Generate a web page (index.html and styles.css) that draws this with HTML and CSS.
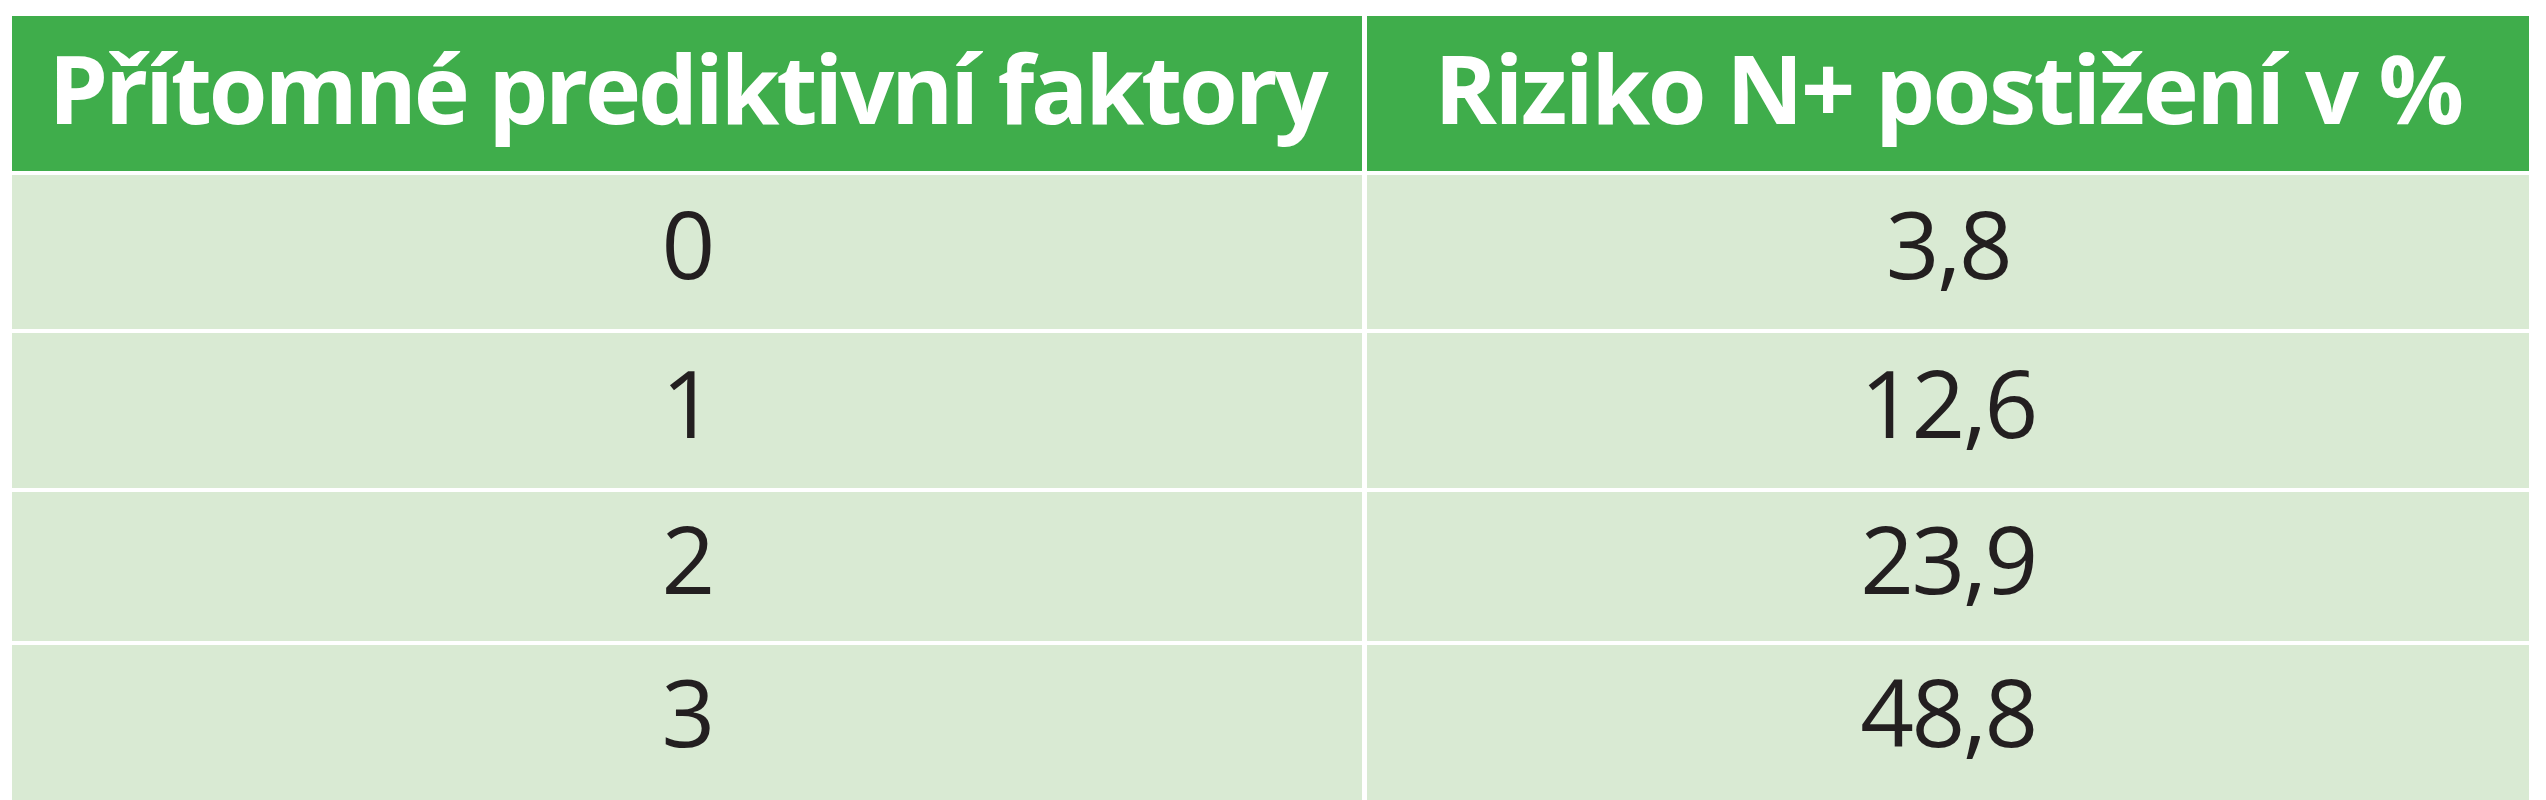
FILE: index.html
```html
<!DOCTYPE html>
<html lang="cs">
<head>
<meta charset="utf-8">
<title>Riziko N+ postižení</title>
<link rel="stylesheet" href="styles.css">
</head>
<body>
<div class="table">
  <div class="cell head head-factors">Přítomné prediktivní faktory</div>
  <div class="cell head">Riziko N+ postižení v %</div>
  <div class="cell body">0</div>
  <div class="cell body">3,8</div>
  <div class="cell body">1</div>
  <div class="cell body">12,6</div>
  <div class="cell body">2</div>
  <div class="cell body">23,9</div>
  <div class="cell body">3</div>
  <div class="cell body">48,8</div>
</div>
</body>
</html>
```

FILE: styles.css
```css
html, body {
  margin: 0;
  padding: 0;
  background: #ffffff;
}

body {
  overflow: hidden;
}

.table {
  display: grid;
  grid-template-columns: 1350px 1162px;
  grid-template-rows: 155px 154px 155px 149px 170px;
  gap: 4px 5px;
  margin: 16px 0 0 12px;
  font-family: "Open Sans", "Noto Sans", sans-serif;
}

.cell {
  display: flex;
  align-items: center;
  justify-content: center;
  line-height: 1;
  white-space: nowrap;
}

.head {
  background: #3fad4b;
  color: #ffffff;
  font-weight: 700;
  font-size: 95px;
  letter-spacing: -2.5px;
  padding-bottom: 12px;
}

.head-factors {
  letter-spacing: -3.2px;
}

.body {
  background: #d9ead3;
  color: #231f20;
  font-weight: 400;
  font-size: 94px;
  letter-spacing: -2.5px;
  padding-bottom: 18px;
}

.table .body:nth-last-child(-n+2) {
  padding-bottom: 38px;
}
```
